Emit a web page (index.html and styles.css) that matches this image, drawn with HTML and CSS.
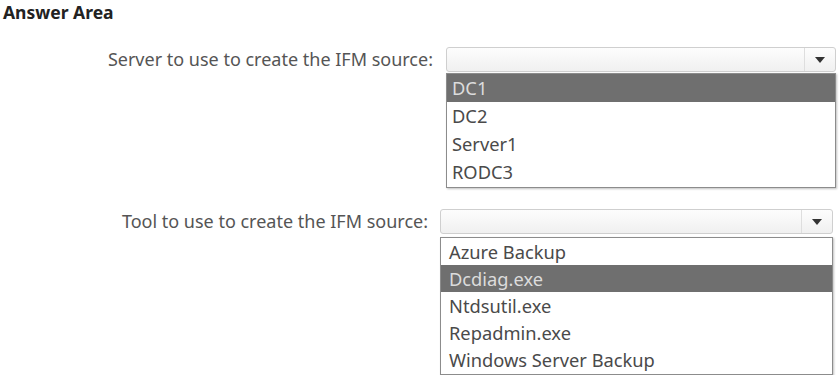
FILE: index.html
```html
<!DOCTYPE html>
<html lang="en">
<head>
    <meta charset="UTF-8">
    <title>Answer Area</title>
    <link rel="stylesheet" href="styles.css">
</head>
<body>
    <div class="answer-area">
        <h2 class="title">Answer Area</h2>

        <!-- Server dropdown -->
        <div class="question server">
            <div class="label">Server to use to create the IFM source:</div>
            <div class="picker">
                <div class="select">
                    <span class="value"></span>
                    <span class="arrow"><svg width="10" height="6" viewBox="0 0 10 6"><path d="M0 0H10L5 6Z" fill="#333"/></svg></span>
                </div>
                <ul class="options">
                    <li class="selected">DC1</li>
                    <li>DC2</li>
                    <li>Server1</li>
                    <li>RODC3</li>
                </ul>
            </div>
        </div>

        <!-- Tool dropdown -->
        <div class="question tool">
            <div class="label">Tool to use to create the IFM source:</div>
            <div class="picker">
                <div class="select">
                    <span class="value"></span>
                    <span class="arrow"><svg width="10" height="6" viewBox="0 0 10 6"><path d="M0 0H10L5 6Z" fill="#333"/></svg></span>
                </div>
                <ul class="options">
                    <li>Azure Backup</li>
                    <li class="selected">Dcdiag.exe</li>
                    <li>Ntdsutil.exe</li>
                    <li>Repadmin.exe</li>
                    <li>Windows Server Backup</li>
                </ul>
            </div>
        </div>
    </div>
</body>
</html>
```

FILE: styles.css
```css
body {
    margin: 0;
    padding: 0;
    background: #fff;
    font-family: "Noto Sans", "Open Sans", sans-serif;
    color: #444;
}

.answer-area {
    padding: 2px 0 0 3px;
}

.title {
    margin: 0;
    font-size: 17.5px;
    font-weight: bold;
    color: #222;
    line-height: 20px;
}

.question {
    display: flex;
    align-items: flex-start;
}

.question.server {
    margin-top: 25px;
}

.question.tool {
    margin-top: 21px;
}

.label {
    width: 443px;
    text-align: right;
    font-size: 18px;
    line-height: 25px;
    color: #555;
    padding-right: 13px;
    box-sizing: border-box;
}

.tool .label {
    width: 437px;
    padding-right: 12px;
}

.picker {
    width: 390px;
}

.tool .picker {
    width: 393px;
}

.select {
    display: flex;
    height: 25px;
    border: 1px solid #cfcfcf;
    border-radius: 3px;
    background: linear-gradient(#fdfdfd, #f0f0f0);
    box-sizing: border-box;
}

.select .value {
    flex: 1;
}

.select .arrow {
    width: 30px;
    border-left: 1px solid #dedede;
    display: flex;
    align-items: center;
    justify-content: center;
}

.options {
    list-style: none;
    margin: 1px 0 0;
    padding: 0 0 1px;
    border: 1px solid #8c8c8c;
    box-shadow: 1px 1px 2px rgba(0, 0, 0, 0.25);
    background: #fff;
}

.tool .options {
    margin-top: 3px;
}

.options li {
    height: 28px;
    line-height: 28px;
    padding-left: 5px;
    font-size: 18.3px;
    color: #4a4a4a;
}

.tool .options li {
    height: 27px;
    line-height: 27px;
    padding-left: 8px;
}

.options li.selected {
    background: #6f6f6f;
    color: #dcdcdc;
}
```
